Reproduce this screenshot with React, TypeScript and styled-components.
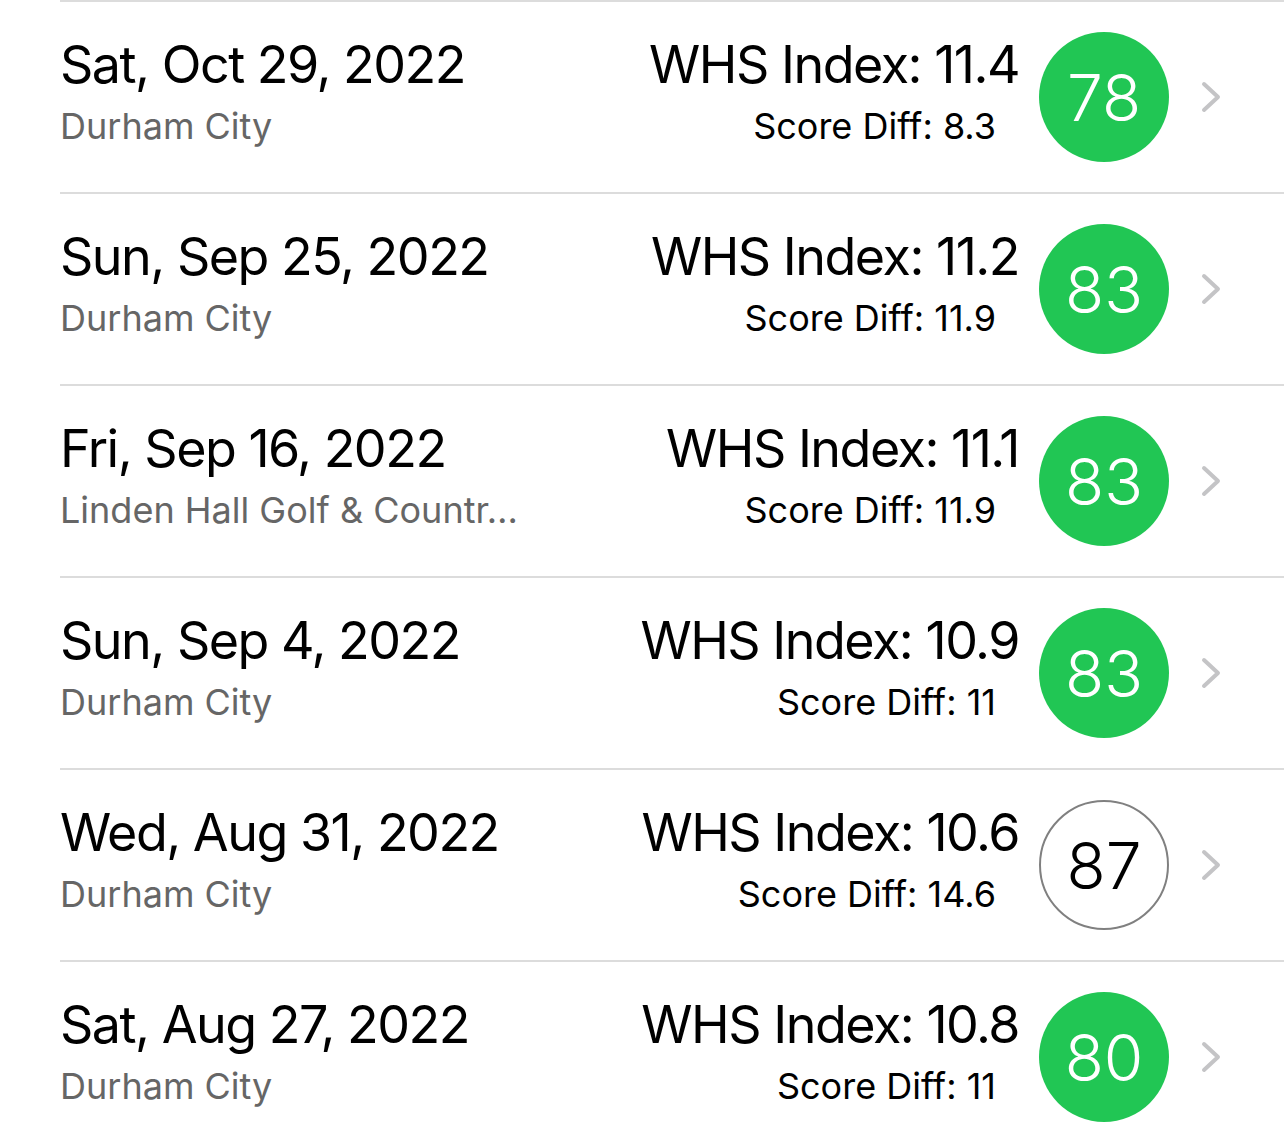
import React from "react";
import styled, { createGlobalStyle } from "styled-components";

const GlobalStyle = createGlobalStyle`
  body {
    margin: 0;
    background: #ffffff;
    font-family: Inter, "Noto Sans", sans-serif;
  }
`;

const List = styled.section`
  width: 1284px;
  overflow: hidden;
`;

const Row = styled.div`
  display: flex;
  align-items: center;
  height: 190px;
  margin-left: 60px;
  padding-right: 62px;
  border-top: 2px solid #dcdcdc;
`;

const Info = styled.div`
  flex: 1;
  min-width: 0;
  display: flex;
  flex-direction: column;
  margin-top: -4px;
`;

const DateText = styled.div`
  font-size: 52px;
  line-height: 62px;
  letter-spacing: -1.5px;
  color: #000;
  white-space: nowrap;
`;

const Venue = styled.div`
  font-size: 36px;
  line-height: 60px;
  color: #666666;
  white-space: nowrap;
`;

const Stats = styled.div`
  display: flex;
  flex-direction: column;
  align-items: flex-end;
  margin-top: -4px;
`;

const Index = styled.div`
  font-size: 52px;
  line-height: 62px;
  letter-spacing: -1.5px;
  color: #000;
  white-space: nowrap;
`;

const Diff = styled.div`
  font-size: 36px;
  line-height: 60px;
  color: #000;
  padding-right: 23px;
  white-space: nowrap;
`;

const Score = styled.div<{ $filled: boolean }>`
  flex: none;
  width: 130px;
  height: 130px;
  margin-left: 20px;
  border-radius: 50%;
  box-sizing: border-box;
  display: flex;
  align-items: center;
  justify-content: center;
  font-size: 64px;
  font-weight: 300;
  background: ${p => (p.$filled ? "#21c654" : "#ffffff")};
  color: ${p => (p.$filled ? "#ffffff" : "#000000")};
  border: ${p => (p.$filled ? "none" : "2px solid #808080")};
`;

const Chevron = styled.svg`
  flex: none;
  width: 22px;
  height: 34px;
  margin-left: 31px;
`;

interface Round {
  date: string;
  course: string;
  index: string;
  diff: string;
  score: number;
  counted: boolean;
}

// the long course name is shown cut short in the app, kept as seen
const rounds: Round[] = [
  { date: "Sat, Oct 29, 2022", course: "Durham City", index: "11.4", diff: "8.3", score: 78, counted: true },
  { date: "Sun, Sep 25, 2022", course: "Durham City", index: "11.2", diff: "11.9", score: 83, counted: true },
  { date: "Fri, Sep 16, 2022", course: "Linden Hall Golf & Countr\u2026", index: "11.1", diff: "11.9", score: 83, counted: true },
  { date: "Sun, Sep 4, 2022", course: "Durham City", index: "10.9", diff: "11", score: 83, counted: true },
  { date: "Wed, Aug 31, 2022", course: "Durham City", index: "10.6", diff: "14.6", score: 87, counted: false },
  { date: "Sat, Aug 27, 2022", course: "Durham City", index: "10.8", diff: "11", score: 80, counted: true }
];

const App = () => {
  return (
    <List>
      <GlobalStyle />
      {rounds.map(r => (
        <Row key={r.date}>
          <Info>
            <DateText>{r.date}</DateText>
            <Venue>{r.course}</Venue>
          </Info>
          <Stats>
            <Index>WHS Index: {r.index}</Index>
            <Diff>Score Diff: {r.diff}</Diff>
          </Stats>
          <Score $filled={r.counted}>{r.score}</Score>
          <Chevron viewBox="0 0 22 34">
            <path
              d="M4 4 L18 17 L4 30"
              fill="none"
              stroke="#c4c4c6"
              strokeWidth="4"
              strokeLinecap="round"
              strokeLinejoin="round"
            />
          </Chevron>
        </Row>
      ))}
    </List>
  );
};

export default App;
